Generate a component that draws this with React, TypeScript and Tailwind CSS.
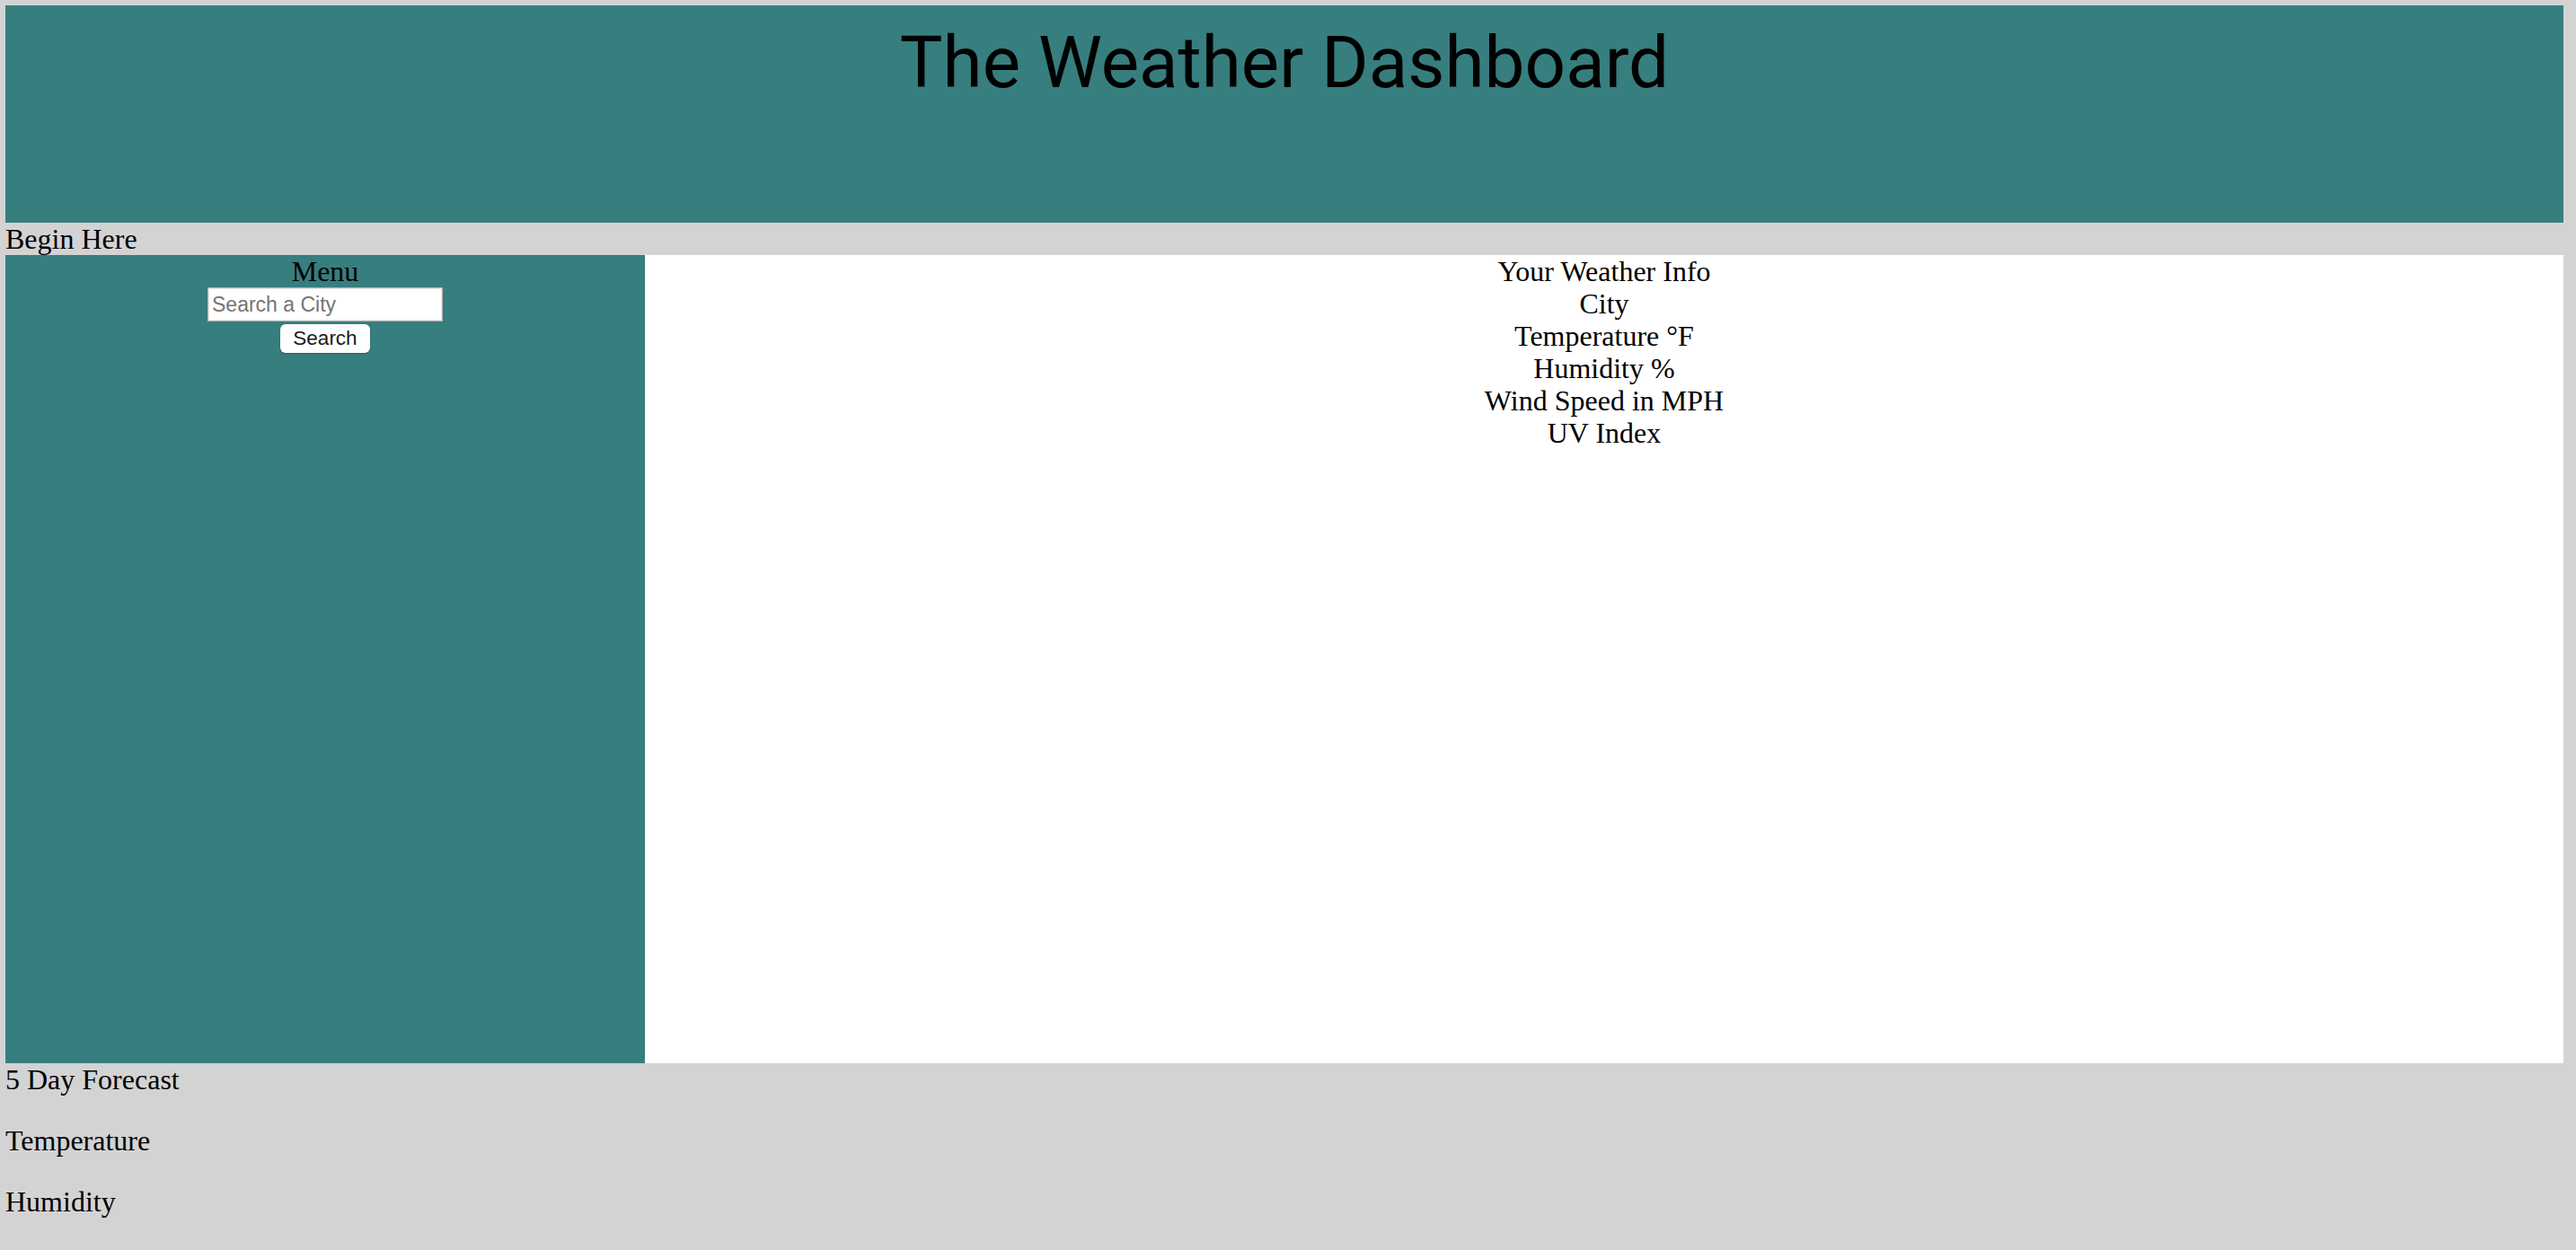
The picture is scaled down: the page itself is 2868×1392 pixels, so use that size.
export default function App() {
  return (
    <div className="min-h-screen bg-[#d3d3d3] pt-[6px] pl-[6px] pr-[14px] font-['Liberation_Serif',serif] text-[32px] leading-[36px] text-black">
      <header className="h-[242px] bg-[#377e7f] pt-[24px]">
        <h1 className="text-center font-['Roboto',sans-serif] text-[80px] leading-none font-normal">
          The Weather Dashboard
        </h1>
      </header>
      <div className="h-[36px]">Begin Here</div>
      <div className="flex h-[900px]">
        <aside className="w-[712px] bg-[#377e7f] flex flex-col items-center">
          <div className="h-[36px]">Menu</div>
          <input
            type="text"
            placeholder="Search a City"
            className="w-[262px] h-[38px] bg-white border border-[#b5b5b5] shadow-[inset_0_0_0_1px_#e6e6e6] px-[4px] font-['Liberation_Sans',sans-serif] text-[23px] text-black placeholder:text-[#757575] outline-none"
          />
          <button className="mt-[3px] w-[100px] h-[32px] bg-white rounded-[6px] shadow-[0_1px_2px_rgba(0,0,0,0.25)] font-['Liberation_Sans',sans-serif] text-[22.5px] leading-none text-[#1a1a1a]">
            Search
          </button>
        </aside>
        <main className="flex-1 bg-white text-center">
          <div>Your Weather Info</div>
          <div>City</div>
          <div>Temperature °F</div>
          <div>Humidity %</div>
          <div>Wind Speed in MPH</div>
          <div>UV Index</div>
        </main>
      </div>
      <section>
        <div>5 Day Forecast</div>
        <p className="my-[32px]">Temperature</p>
        <p>Humidity</p>
      </section>
    </div>
  );
}
